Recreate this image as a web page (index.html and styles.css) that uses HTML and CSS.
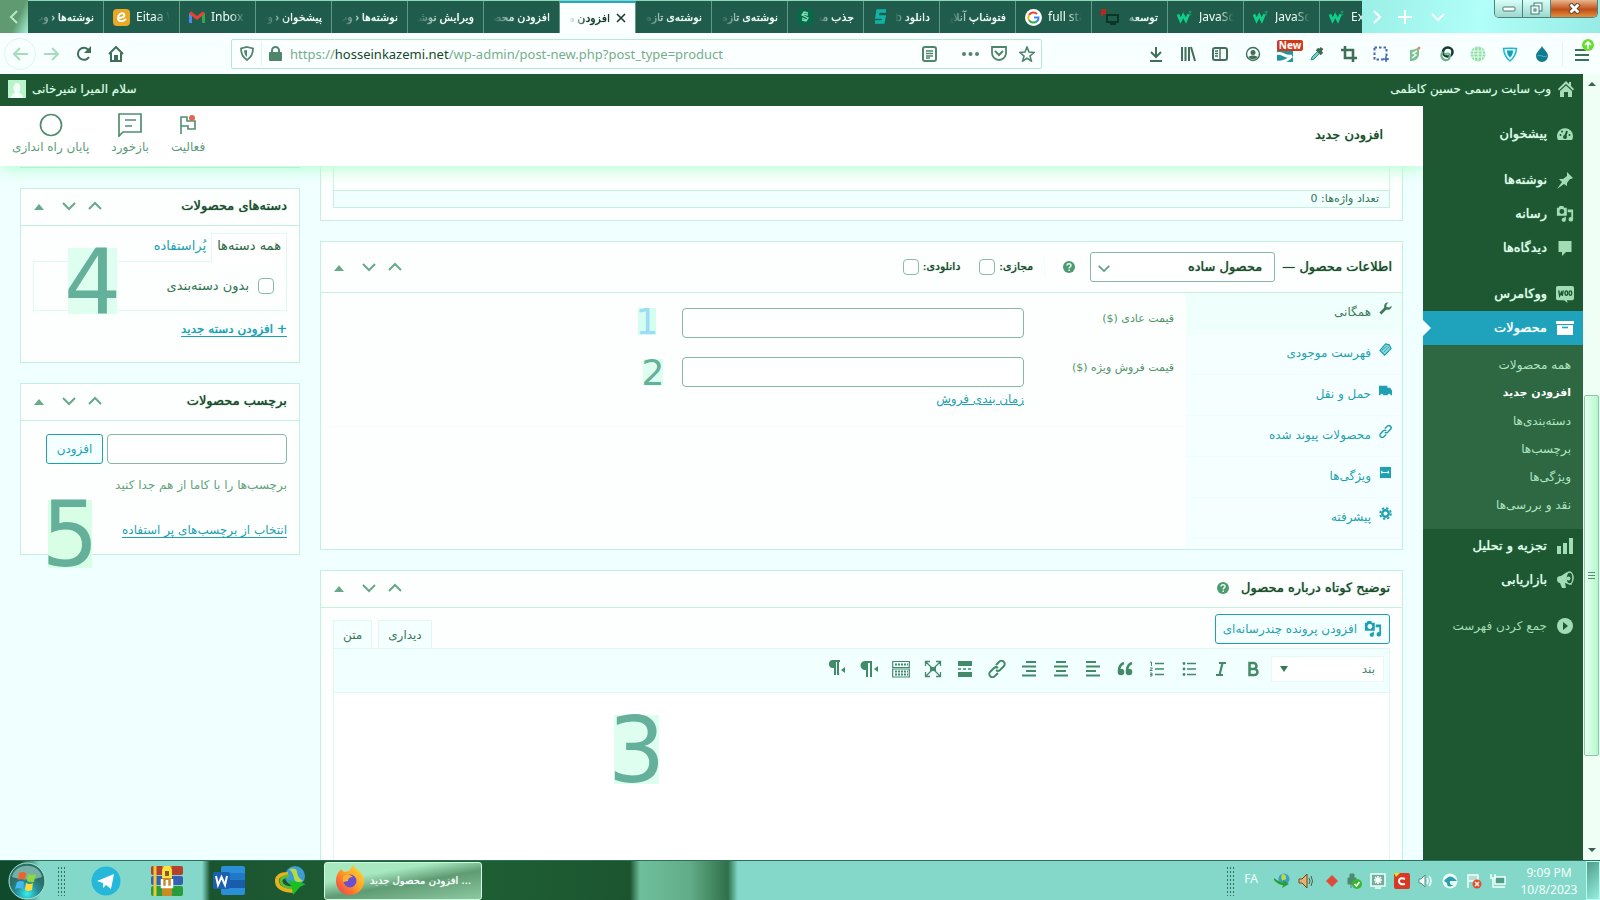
FILE: index.html
```html
<!DOCTYPE html>
<html lang="fa">
<head>
<meta charset="utf-8">
<title>افزودن محصول جدید</title>
<link rel="stylesheet" href="styles.css">
</head>
<body>
<svg class="defs" aria-hidden="true">
  <symbol id="up" viewBox="0 0 16 10"><path d="M2 8l6-6 6 6" fill="none" stroke="currentColor" stroke-width="2"/></symbol>
  <symbol id="down" viewBox="0 0 16 10"><path d="M2 2l6 6 6-6" fill="none" stroke="currentColor" stroke-width="2"/></symbol>
  <symbol id="tri" viewBox="0 0 10 7"><path d="M0 7l5-6 5 6z" fill="currentColor"/></symbol>
  <symbol id="help" viewBox="0 0 14 14"><circle cx="7" cy="7" r="6" fill="currentColor"/><path d="M5 5.6c0-2.6 4-2.6 4 0C9 7 7.200 6.900 7.200 8.500M7.200 9.600v1.400" fill="none" stroke="#dfffec" stroke-width="1.500"/></symbol>
  <symbol id="media" viewBox="0 0 20 20"><path fill="currentColor" fill-rule="evenodd" d="M1 3h2l1-2h4l1 2h3v9H1zM6.500 4.500a2.700 2.700 0 100 5.400 2.700 2.700 0 000-5.400zM13 5h6v11a2.500 2.500 0 11-2-2.500V8h-4zM11 13v3.500a2.300 2.300 0 11-1.500-2.200V13z"/></symbol>
  <symbol id="w3" viewBox="0 0 18 14"><path d="M1 4l3 7 3-6 3 6 3-7" fill="none" stroke="#0fd08a" stroke-width="3"/><path d="M13 1h3l-2 2c2 0 2 2 0 2" fill="none" stroke="#0fb07a"/></symbol>
  <symbol id="link" viewBox="0 0 18 18"><g fill="none" stroke="currentColor" stroke-width="2"><path d="M8 5l3-3a3 3 0 015 4l-4 4a3 3 0 01-4 0"/><path d="M10 13l-3 3a3 3 0 01-5-4l4-4a3 3 0 014 0"/></g></symbol>
  <symbol id="house" viewBox="0 0 18 18"><path fill="currentColor" d="M9 1l3 3V2h2v4l3 3-1 1.500L9 4 2 10.500 1 9zM9 5.500l6 5.500v6h-4v-5H7v5H3v-6z"/></symbol>
</svg>

<header class="tabstrip" dir="ltr">
  <button class="scroll-left" aria-label="قبلی"><svg width="10" height="14" viewBox="0 0 10 14"><path d="M8 1L2 7l6 6" fill="none" stroke="#b8e8c4" stroke-width="2"/></svg></button>
  <nav class="tabs">
    <a href="#" class="tab"><span class="fa">نوشته‌ها ‹ وب</span></a>
    <a href="#" class="tab"><svg width="17" height="17" viewBox="0 0 17 17"><rect width="17" height="17" rx="4" fill="#e9a825"/><path d="M5 9c6 0 7-2 6-4-2-2-6 0-6 4s5 4 8 1" fill="none" stroke="#fff" stroke-width="2"/></svg><span>Eitaa Web</span></a>
    <a href="#" class="tab"><svg width="16" height="12" viewBox="0 0 16 12"><path d="M1.500 12V2" stroke="#4a8af4" stroke-width="3"/><path d="M14.500 12V2" stroke="#30a852" stroke-width="3"/><path d="M1 1.500l7 5.500 7-5.500" fill="none" stroke="#e94235" stroke-width="3"/></svg><span>Inbox (1)</span></a>
    <a href="#" class="tab"><span class="fa">پیشخوان ‹ وب</span></a>
    <a href="#" class="tab"><span class="fa">نوشته‌ها ‹ وب</span></a>
    <a href="#" class="tab"><span class="fa">ویرایش نوشته ‹</span></a>
    <a href="#" class="tab"><span class="fa">افزودن محصول</span></a>
    <a href="#" class="tab active"><span class="fa">افزودن محصول</span><svg width="10" height="10" viewBox="0 0 10 10"><path d="M1 1l8 8M9 1L1 9" stroke="#143c28" stroke-width="1.600"/></svg></a>
    <a href="#" class="tab"><span class="fa">نوشته‌ی تازه ‹</span></a>
    <a href="#" class="tab"><span class="fa">نوشته‌ی تازه ‹</span></a>
    <a href="#" class="tab"><svg width="16" height="16" viewBox="0 0 16 16"><rect width="16" height="16" rx="3" fill="#08684a"/><path d="M11 4L7 3 5 6l6 3-2 3-4-1M11 6L6 5M10 11L5 9" fill="none" stroke="#7fe0b4" stroke-width="1.300"/></svg><span class="fa">جذب مشتری</span></a>
    <a href="#" class="tab"><svg width="16" height="16" viewBox="0 0 16 16"><path d="M13 2H5L4 8h7l-1 5H2" fill="none" stroke="#10b3a8" stroke-width="3.500"/></svg><span class="fa">دانلود eb</span></a>
    <a href="#" class="tab"><span class="fa">فتوشاپ آنلاین</span></a>
    <a href="#" class="tab"><svg width="17" height="17" viewBox="0 0 17 17"><circle cx="8.500" cy="8.500" r="8.500" fill="#fff"/><g fill="none" stroke-width="2"><path d="M12 5A5 5 0 004 6" stroke="#ea4335"/><path d="M4 6a5 5 0 000 5" stroke="#fbbc05"/><path d="M4 11a5 5 0 008 1" stroke="#34a853"/><path d="M12 12.500a5 5 0 001.500-4H9" stroke="#4285f4"/></g></svg><span>full stack</span></a>
    <a href="#" class="tab"><svg width="18" height="16" viewBox="0 0 18 16"><path d="M6 6h11v7H6zM9 15h6" fill="none" stroke="#0b3525" stroke-width="2"/><path d="M1 7V1h3v3H1" fill="none" stroke="#c82020" stroke-width="2"/></svg><span class="fa">توسعه وب</span></a>
    <a href="#" class="tab"><svg width="16" height="14"><use href="#w3"/></svg><span>JavaScript</span></a>
    <a href="#" class="tab"><svg width="16" height="14"><use href="#w3"/></svg><span>JavaScript</span></a>
    <a href="#" class="tab"><svg width="16" height="14"><use href="#w3"/></svg><span>Exercise</span></a>
  </nav>
  <div class="strip-end">
    <svg width="80" height="16" viewBox="0 0 80 16"><g fill="none" stroke="#fff" stroke-width="2"><path d="M2 2l6 6-6 6M33 1v14M26 8h14M60 5l6 6 6-6"/></g></svg>
    <div class="winbtns">
      <button aria-label="کوچک"><svg width="14" height="6"><rect x="1" y="1" width="12" height="4" rx="1" fill="#fff" stroke="#4a7a70"/></svg></button>
      <button aria-label="بازگردانی"><svg width="13" height="13"><g fill="#eaffff" stroke="#4a7a70"><rect x="4" y="1" width="8" height="8"/><rect x="1" y="4" width="8" height="8"/><rect x="4" y="7" width="2" height="2"/></g></svg></button>
      <button class="x" aria-label="بستن"><svg width="13" height="11" viewBox="0 0 13 11"><path d="M2 1l9 9M11 1l-9 9" stroke="#4a3020" stroke-width="4.500"/><path d="M2.500 1.500l8 8M10.500 1.500l-8 8" stroke="#fff" stroke-width="3"/></svg></button>
    </div>
  </div>
</header>

<div class="navbar" dir="ltr">
  <div class="navbtns">
    <button class="back" aria-label="عقب"><svg width="16" height="14" viewBox="0 0 16 14"><path d="M16 7H2M8 1L2 7l6 6" fill="none" stroke="#a6dcbc" stroke-width="2"/></svg></button>
    <button aria-label="جلو"><svg width="16" height="14" viewBox="0 0 16 14"><path d="M0 7h14M8 1l6 6-6 6" fill="none" stroke="#a6dcbc" stroke-width="2"/></svg></button>
    <button aria-label="بارگذاری"><svg width="16" height="16" viewBox="0 0 16 16"><path d="M13 11a6 6 0 11-.5-7" fill="none" stroke="currentColor" stroke-width="2"/><path d="M15 0v7H8z" fill="currentColor"/></svg></button>
    <button aria-label="خانه"><svg width="16" height="16" viewBox="0 0 16 16"><path d="M1 8l7-7 7 7M3 7v8h10V7" fill="none" stroke="currentColor" stroke-width="2"/><path d="M6 9h4v6H6z" fill="currentColor"/></svg></button>
  </div>
  <div class="urlbar">
    <svg width="14" height="15" viewBox="0 0 14 15"><path d="M7 1l6 1.500c0 6-2 9-6 11.500C3 11.500 1 8.500 1 2.500z" fill="none" stroke="currentColor" stroke-width="1.800"/><path d="M7 4l-3 .6c.2 3 1 5 3 6.400z" fill="currentColor"/></svg>
    <i class="vsep"></i>
    <svg width="13" height="15" viewBox="0 0 13 15"><rect y="6" width="13" height="9" rx="1" fill="currentColor"/><path d="M3 7V4.500a3.500 3.500 0 017 0V7" fill="none" stroke="currentColor" stroke-width="2"/></svg>
    <span class="url">https://<b>hosseinkazemi.net</b>/wp-admin/post-new.php?post_type=product</span>
    <span class="urlicons">
      <svg width="15" height="16" viewBox="0 0 15 16"><rect x="1" y="1" width="13" height="14" rx="2" fill="none" stroke="currentColor" stroke-width="2"/><path d="M4 5h7M4 7.500h7M4 10h7M4 12h4" stroke="currentColor" stroke-width="1.300"/></svg>
      <svg class="dots" width="17" height="4" viewBox="0 0 17 4"><circle cx="2" cy="2" r="2" fill="currentColor"/><circle cx="8.500" cy="2" r="2" fill="currentColor"/><circle cx="15" cy="2" r="2" fill="currentColor"/></svg>
      <svg width="16" height="15" viewBox="0 0 16 15"><path d="M1 1h14v6a7 7 0 01-14 0z" fill="none" stroke="currentColor" stroke-width="1.800"/><path d="M4 5l4 4 4-4" fill="none" stroke="currentColor" stroke-width="2"/></svg>
      <svg width="16" height="16" viewBox="0 0 16 16"><path d="M8 1l2 5 5 .5-4 3.500 1.300 5L8 12.300 3.700 15 5 10 1 6.500 6 6z" fill="none" stroke="currentColor" stroke-width="1.600"/></svg>
    </span>
  </div>
  <div class="ext">
    <svg viewBox="0 0 16 16"><path d="M8 1v10M3 6l5 5 5-5M2 15h12" fill="none" stroke="currentColor" stroke-width="2"/></svg>
    <svg viewBox="0 0 16 16"><path d="M2 1v14M5.500 1v14M9 1v14M11 1l4 14" stroke="currentColor" stroke-width="2"/></svg>
    <svg viewBox="0 0 16 16"><rect x="1" y="2" width="14" height="12" rx="2" fill="none" stroke="currentColor" stroke-width="2"/><path d="M8 2v12M3 5h3M3 7.500h3M3 10h3" stroke="currentColor" stroke-width="1.400"/></svg>
    <svg viewBox="0 0 16 16"><circle cx="8" cy="8" r="6.500" fill="none" stroke="currentColor" stroke-width="1.400"/><circle cx="8" cy="6.500" r="2.500" fill="currentColor"/><path d="M3.500 11c2-2 7-2 9 0-2 3-7 3-9 0z" fill="currentColor"/></svg>
    <span class="newext"><svg viewBox="0 0 16 16"><rect width="16" height="16" fill="#21939a"/><path d="M0 8c4-3 8 4 15 2M0 16c7 1 12-3 15-6" stroke="#fff" stroke-width="3" fill="none"/></svg><em>New</em></span>
    <svg viewBox="0 0 16 16"><path d="M2 14l1-3 6-6 2 2-6 6z" fill="#6fd0c0" stroke="#2c8a80"/><path d="M8 3l5 5M10 6l3-4" stroke="#3b6b50" stroke-width="3.500"/></svg>
    <svg viewBox="0 0 16 16"><path d="M4 0v12h12M0 4h12v12" fill="none" stroke="currentColor" stroke-width="2.600"/></svg>
    <svg viewBox="0 0 16 16"><rect x="1.500" y="1.500" width="12" height="12" fill="none" stroke="#4565b5" stroke-width="2" stroke-dasharray="2.500 2"/><path d="M13 10v6M10 13h6" stroke="#4565b5" stroke-width="1.500"/></svg>
    <svg viewBox="0 0 16 16"><path d="M4 4c3 0 7-1 9-3v8c-1 4-4 6-9 6z" fill="#7fbf94"/><path d="M11 5L7 7l3 2-4 3" stroke="#eafff2" stroke-width="1.500" fill="none"/><circle cx="13" cy="2" r="1.500" fill="#e89070"/></svg>
    <svg viewBox="0 0 16 16"><rect x="5" y="1.500" width="9.500" height="9" rx="4.500" fill="none" stroke="#123e2c" stroke-width="2.600"/><path d="M5 6a4.500 4.500 0 106 7l1-4c-1-2-4-2-5 0" fill="none" stroke="#6fb090" stroke-width="2.200"/></svg>
    <svg viewBox="0 0 16 16"><circle cx="8" cy="8" r="7.500" fill="#8fdca4"/><path d="M1 5h14M1 11h14M0 8h16M8 0v16M5 1Q2 8 5 15M11 1q3 7 0 14" stroke="#e8fff0" fill="none"/></svg>
    <svg viewBox="0 0 16 16"><path d="M8 15C4 12 2 8 1.500 2.500 6 2 10 2 14.500 2.500 14 8 12 12 8 15z" fill="#d8ffff" stroke="#25b4d0" stroke-width="1.500"/><path d="M8 4.500h3c0 3-1 5-3 7-2-2-3-4-3-7z" fill="#159cba"/></svg>
    <svg viewBox="0 0 16 16"><path d="M8 0c2 4 6 6 6 10a6 6 0 01-12 0c0-4 4-6 6-10z" fill="#137b90"/><path d="M3 10c4-2 6 2 10 0" stroke="#45b8c4" fill="none"/></svg>
    <i class="vsep"></i>
    <button class="menu" aria-label="منو"><svg width="20" height="24" viewBox="0 0 20 24"><path d="M1 11h11M1 16h14M1 21h14" stroke="#3f7057" stroke-width="2"/><circle cx="14" cy="6" r="6" fill="#63e02c"/><path d="M14 10V3M11 6l3-3 3 3" fill="none" stroke="#fff" stroke-width="1.700"/></svg></button>
  </div>
</div>

<div class="viewport">
  <div class="site" dir="rtl">
    <div class="adminbar">
      <a href="#"><svg width="18" height="18" class="pale"><use href="#house"/></svg>وب سایت رسمی حسین کاظمی</a>
      <a href="#">سلام المیرا شیرخانی<svg width="18" height="18" viewBox="0 0 18 18"><rect width="18" height="18" fill="#b8f5cc"/><path d="M3 18c0-4 3-4 4-6C4 8 6 3 9 3s5 5 2 9c1 2 4 2 4 6z" fill="#f4fff8"/></svg></a>
    </div>
    <div class="wrap">
      <nav class="sidebar">
        <a href="#"><svg viewBox="0 0 18 18"><path d="M2 15a8 8 0 1114 0z" fill="currentColor"/><path d="M9 12l2-6" stroke="#1d5832" stroke-width="2"/><g fill="#1d5832"><circle cx="9" cy="12" r="2"/><circle cx="4.500" cy="10" r="1"/><circle cx="6" cy="6.500" r="1"/><circle cx="13.500" cy="10" r="1"/></g></svg>پیشخوان</a>
        <hr>
        <a href="#"><svg viewBox="0 0 18 18"><path d="M11 1l6 6-2 1-1 0-3 4v3l-3-2-7 5 5-7-3-3h4l4-3z" fill="currentColor"/></svg>نوشته‌ها</a>
        <a href="#"><svg viewBox="0 0 20 20"><use href="#media"/></svg>رسانه</a>
        <a href="#"><svg viewBox="0 0 18 18"><path d="M2.500 2h13v11H10l-4 4v-4H2.500z" fill="currentColor"/></svg>دیدگاه‌ها</a>
        <hr>
        <a href="#"><svg viewBox="0 0 20 20" class="woo"><path d="M2 1h16q2 0 2 2v12q0 2-2 2h-6l1 3-4-3H2q-2 0-2-2V3q0-2 2-2z" fill="currentColor"/><path d="M3 6l1 6 2-4 1 4 1-6" fill="none" stroke="#1d5832" stroke-width="1.500"/><g fill="none" stroke="#1d5832" stroke-width="1.500"><ellipse cx="11.500" cy="9" rx="1.500" ry="2.500"/><ellipse cx="16" cy="9" rx="1.500" ry="2.500"/></g></svg>ووکامرس</a>
        <a href="#" class="current"><svg viewBox="0 0 18 18"><path d="M0 2h18v3H0zM1 6h16v10H1z" fill="#fff"/><path d="M6 8.500h6" stroke="#1fa3bd" stroke-width="1.600"/></svg>محصولات</a>
        <div class="sub">
          <a href="#">همه محصولات</a><a href="#" class="on">افزودن جدید</a><a href="#">دسته‌بندی‌ها</a><a href="#">برچسب‌ها</a><a href="#">ویژگی‌ها</a><a href="#">نقد و بررسی‌ها</a>
        </div>
        <a href="#"><svg viewBox="0 0 18 18"><path d="M1 9h4v8H1zM7 6h4v11H7zM13 1h4v16h-4z" fill="currentColor"/></svg>تجزیه و تحلیل</a>
        <a href="#"><svg viewBox="0 0 18 18"><path d="M1 8q0-3 4-3l6-4 5 13-7-2 1 5H6l-2-5Q1 12 1 8z" fill="currentColor"/><ellipse cx="13.500" cy="7" rx="3.500" ry="6" fill="#1d5832" stroke="currentColor" stroke-width="1.500"/><circle cx="12.500" cy="7.500" r="2" fill="currentColor"/></svg>بازاریابی</a>
        <hr>
        <a href="#" class="collapse"><svg viewBox="0 0 18 18"><circle cx="9" cy="9" r="8" fill="currentColor"/><path d="M7 5l5 4-5 4z" fill="#1d5832"/></svg>جمع کردن فهرست</a>
      </nav>

      <main>
        <div class="pagehead">
          <h1>افزودن جدید</h1>
          <div class="acts">
            <button><svg width="24" height="24" viewBox="0 0 24 24"><path d="M5 21V4h6v4h8v8h-7v-3H5" fill="none" stroke="currentColor" stroke-width="1.600"/><circle cx="16" cy="5" r="3" fill="#dd6a50"/></svg>فعالیت</button>
            <button><svg width="24" height="24" viewBox="0 0 24 24"><path d="M1 1h22v18H5l-4 4zM7 7h11M7 13h7" fill="none" stroke="currentColor" stroke-width="1.700"/></svg>بازخورد</button>
            <button><svg width="24" height="24" viewBox="0 0 24 24"><circle cx="12" cy="12" r="10.500" fill="none" stroke="currentColor" stroke-width="1.700"/></svg>پایان راه اندازی</button>
          </div>
        </div>

        <div class="content">
          <div class="primary">
            <section class="box editor-end"><div class="edit-area"></div><div class="wordcount">تعداد واژه‌ها: 0</div></section>

            <section class="box product">
              <div class="boxhead tall">
                <h2>اطلاعات محصول —</h2>
                <span class="selwrap"><select aria-label="نوع محصول"><option>محصول ساده</option></select><svg width="14" height="9"><use href="#down"/></svg></span>
                <svg class="help" width="14" height="14"><use href="#help"/></svg>
                <label class="first">مجازی:<input type="checkbox"></label>
                <label>دانلودی:<input type="checkbox"></label>
                <div class="handles"><svg width="16" height="10"><use href="#up"/></svg><svg width="16" height="10"><use href="#down"/></svg><svg class="t" width="10" height="7"><use href="#tri"/></svg></div>
              </div>
              <div class="pbody">
                <div class="ptabs">
                  <a href="#" class="on"><svg viewBox="0 0 14 14"><path d="M1.500 12.500L8 6" stroke="currentColor" stroke-width="3"/><path d="M10 0.500a4 4 0 103.500 3.500L11 6 8 5.500V3z" fill="currentColor"/></svg>همگانی</a>
                  <a href="#"><svg viewBox="0 0 14 14"><path d="M7 1l4 1 2 4-7 7-5-5z" fill="#8fd8dc" stroke="currentColor" stroke-width="1.300"/><path d="M3 8l6-5M5 10l6-6" stroke="currentColor"/></svg>فهرست موجودی</a>
                  <a href="#"><svg viewBox="0 0 14 14"><path d="M0 2h9v2h3l2 3v5H0z" fill="currentColor"/><circle cx="3" cy="12" r="1.500" fill="#f4ffff"/><circle cx="11" cy="12" r="1.500" fill="#f4ffff"/></svg>حمل و نقل</a>
                  <a href="#"><svg viewBox="0 0 18 18"><use href="#link"/></svg>محصولات پیوند شده</a>
                  <a href="#"><svg viewBox="0 0 14 14"><path d="M1 1h12v12H1z" fill="currentColor"/><path d="M3 8V5m0 2h4m3 1V5M7 7h4" stroke="#f4ffff" stroke-width="1.300"/></svg>ویژگی‌ها</a>
                  <a href="#"><svg viewBox="0 0 14 14"><circle cx="7" cy="7" r="3.500" fill="none" stroke="currentColor" stroke-width="2.500"/><circle cx="7" cy="7" r="5.800" fill="none" stroke="currentColor" stroke-width="2" stroke-dasharray="2.500 2.050"/></svg>پیشرفته</a>
                </div>
                <div class="fields">
                  <div class="frow"><label for="p1">قیمت عادی ($)</label><input id="p1" type="text"><span class="mark m1">1</span></div>
                  <div class="frow"><label for="p2">قیمت فروش ویژه ($)</label><input id="p2" type="text"><span class="mark m2">2</span></div>
                  <a href="#" class="sched">زمان بندی فروش</a>
                </div>
              </div>
            </section>

            <section class="box short">
              <div class="boxhead"><h2>توضیح کوتاه درباره محصول</h2><svg class="help" width="14" height="14"><use href="#help"/></svg>
                <div class="handles"><svg width="16" height="10"><use href="#up"/></svg><svg width="16" height="10"><use href="#down"/></svg><svg class="t" width="10" height="7"><use href="#tri"/></svg></div></div>
              <div class="edtop">
                <button class="addmedia"><svg width="18" height="18" viewBox="0 0 20 20"><use href="#media"/></svg>افزودن پرونده چندرسانه‌ای</button>
                <div class="edtabs"><button class="on">دیداری</button><button>متن</button></div>
              </div>
              <div class="editor">
                <div class="toolbar">
                  <button class="para">بند<svg width="8" height="6"><path d="M0 0h8L4 6z" fill="#357a58"/></svg></button>
                  <svg viewBox="0 0 18 18"><path d="M5.500 3h4a3 3 0 010 6h-4zM5.500 9h5a3 3 0 010 6h-5z" fill="none" stroke="currentColor" stroke-width="2.500"/></svg>
                  <svg viewBox="0 0 18 18"><path d="M7 3h7M4 15h7M10.500 3l-3 12" stroke="currentColor" stroke-width="2.200"/></svg>
                  <svg viewBox="0 0 18 18"><path d="M7 3.500h9M7 9h9M7 14.500h9" stroke="currentColor" stroke-width="1.300"/><circle cx="4" cy="3.500" r="1.400" fill="currentColor"/><circle cx="4" cy="9" r="1.400" fill="currentColor"/><circle cx="4" cy="14.500" r="1.400" fill="currentColor"/></svg>
                  <svg viewBox="0 0 18 18"><path d="M7 3.500h9M7 9h9M7 14.500h9" stroke="currentColor" stroke-width="1.300"/><path d="M2 2h1.500v4M2 8h2.500L2 10.500h2.500M2 13h2v3H2M2 14.500h2" fill="none" stroke="currentColor"/></svg>
                  <svg viewBox="0 0 18 18"><path d="M8 3C5 4 3 6 3 11M16 3c-3 1-5 3-5 8" fill="none" stroke="currentColor" stroke-width="2.400"/><circle cx="5" cy="12" r="3.300" fill="currentColor"/><circle cx="13" cy="12" r="3.300" fill="currentColor"/></svg>
                  <svg viewBox="0 0 18 18"><path d="M2 2h10M2 6.500h14M2 11h10M2 15.500h14" stroke="currentColor" stroke-width="2"/></svg>
                  <svg viewBox="0 0 18 18"><path d="M4 2h10M2 6.500h14M4 11h10M2 15.500h14" stroke="currentColor" stroke-width="2"/></svg>
                  <svg viewBox="0 0 18 18"><path d="M6 2h10M2 6.500h14M6 11h10M2 15.500h14" stroke="currentColor" stroke-width="2"/></svg>
                  <svg viewBox="0 0 18 18"><use href="#link"/></svg>
                  <svg viewBox="0 0 18 18"><path d="M2 1h14v5H2zM2 12h14v5H2z" fill="currentColor"/><path d="M2 9h14" stroke="currentColor" stroke-width="1.600" stroke-dasharray="3 2"/></svg>
                  <svg viewBox="0 0 18 18"><path d="M2 2l14 14M16 2L2 16M1.500 6V1.500H6M12 1.500h4.500V6M16.500 12v4.500H12M6 16.500H1.500V12" fill="none" stroke="currentColor" stroke-width="1.300"/><path d="M6 7h6v4H6z" fill="currentColor"/></svg>
                  <svg viewBox="0 0 18 18"><path d="M.7 1.500h16.600v6H.7zM.7 9h16.600v8H.7z" fill="none" stroke="currentColor" stroke-width="1.200"/><path d="M3 4.500h13M3 11.500h13M3 14.500h13" stroke="currentColor" stroke-width="2" stroke-dasharray="2 1"/></svg>
                  <svg viewBox="0 0 18 18"><path d="M12 1H5a4 4 0 000 9h1v7h2V3h2v14h2z" fill="currentColor"/><path d="M18 6v6l-4-3z" fill="currentColor"/></svg>
                  <svg viewBox="0 0 18 18"><path d="M12 0H5a4 4 0 000 8h1v7h2V2h1v13h2V2h1z" fill="currentColor"/><path d="M17 7v6l-4-3z" fill="currentColor"/></svg>
                </div>
                <div class="canvas"><span class="mark m3">3</span></div>
              </div>
            </section>
          </div>

          <aside class="secondary">
            <div class="stub"></div>
            <section class="box cats">
              <div class="boxhead"><h2>دسته‌های محصولات</h2><div class="handles"><svg width="16" height="10"><use href="#up"/></svg><svg width="16" height="10"><use href="#down"/></svg><svg class="t" width="10" height="7"><use href="#tri"/></svg></div></div>
              <div class="inside">
                <div class="cattabs"><a href="#" class="on">همه دسته‌ها</a><a href="#">پُراستفاده</a></div>
                <div class="catlist"><label><input type="checkbox">بدون دسته‌بندی</label></div>
                <a href="#" class="ul strong">+ افزودن دسته جدید</a>
                <span class="mark m4">4</span>
              </div>
            </section>
            <section class="box tags">
              <div class="boxhead"><h2>برچسب محصولات</h2><div class="handles"><svg width="16" height="10"><use href="#up"/></svg><svg width="16" height="10"><use href="#down"/></svg><svg class="t" width="10" height="7"><use href="#tri"/></svg></div></div>
              <div class="inside">
                <div class="tagrow"><input type="text" aria-label="برچسب محصولات"><button>افزودن</button></div>
                <p>برچسب‌ها را با کاما از هم جدا کنید</p>
                <a href="#" class="ul">انتخاب از برچسب‌های پر استفاده</a>
                <span class="mark m5">5</span>
              </div>
            </section>
          </aside>
        </div>
      </main>
    </div>
  </div>
  <div class="scrollbar">
    <svg width="8" height="5"><path d="M0 5l4-4 4 4z" fill="#386050"/></svg>
    <div class="thumb"><i></i><i></i><i></i></div>
    <svg width="8" height="5"><path d="M0 0l4 4 4-4z" fill="#386050"/></svg>
  </div>
</div>

<footer class="taskbar" dir="ltr">
  <button class="orb" aria-label="شروع"><svg width="38" height="38" viewBox="0 0 38 38"><defs><radialGradient id="og" cx=".5" cy=".85"><stop offset="0" stop-color="#35f0f0"/><stop offset=".6" stop-color="#258f98"/><stop offset="1" stop-color="#2b7068"/></radialGradient></defs><circle cx="19" cy="19" r="18" fill="url(#og)" stroke="#a8e8d8"/><path d="M4 15C7 0 31 0 34 15q-15 5-30 0z" fill="#d0fff0" opacity=".45"/><path d="M11 11q4-2 7 0l-1 7q-3-2-7 0z" fill="#f0622c"/><path d="M20 12q4 2 8 0l-2 8q-3 1-7-1z" fill="#8fd837"/><path d="M9 20q4-2 7 0l-1 7q-4-2-8 0z" fill="#46b8f0"/><path d="M18 21q4 2 7 0l-1 7q-4 2-7 0z" fill="#ffd83a"/></svg></button>
  <i class="grip"></i>
  <div class="pins">
    <button aria-label="Telegram"><svg width="30" height="30" viewBox="0 0 30 30"><circle cx="15" cy="15" r="14.500" fill="#26b8d8"/><path d="M6 15l17-7-3 15-5-4-3 3v-5z" fill="#fff"/></svg></button>
    <button aria-label="WinRAR"><svg width="32" height="30" viewBox="0 0 32 30"><rect width="32" height="9" rx="2" fill="#b5402c"/><rect y="10" width="32" height="9" rx="2" fill="#3560b0"/><rect y="20" width="32" height="10" rx="2" fill="#2a9c3a"/><path d="M4 0v30" stroke="#f0c838" stroke-width="3"/><rect x="11" width="10" height="30" fill="#c98a28"/><path d="M11 4l2-4h6l2 4v8H11z" fill="#ffe040"/><path d="M14 5h4v5h-4z" fill="#806020"/><path d="M11 13v8h10v-8M16 14v6" fill="none" stroke="#fff" stroke-width="2.500"/></svg></button>
    <button aria-label="Word"><svg width="32" height="29" viewBox="0 0 32 29"><rect x="8" width="24" height="29" rx="2" fill="#2a8fd8"/><path d="M8 7h24v7H8z" fill="#2078c8"/><path d="M8 14h24v8H8z" fill="#185cab"/><rect y="6" width="17" height="17" rx="2" fill="#1a5fb0"/><path d="M3 10l2 9 3.500-8 3.500 8 2-9" fill="none" stroke="#fff" stroke-width="2"/></svg></button>
    <button aria-label="IDM"><svg width="32" height="30" viewBox="0 0 32 30"><circle cx="20" cy="10" r="10" fill="#3d9bd8"/><path d="M14 3q8-2 8 3t6 9q-8 3-9-3t-5-9z" fill="#b8dc40"/><path d="M13 8Q1 8 2 16t16 9" fill="none" stroke="#e8b020" stroke-width="4"/><path d="M14 10Q5 11 6 16t11 6" fill="none" stroke="#58c030" stroke-width="3"/><path d="M13 14l18 4-6 3-7 8-1-7z" fill="#18c020"/></svg></button>
  </div>
  <button class="task"><svg width="30" height="31" viewBox="0 0 30 31"><defs><linearGradient id="fx" x1="1" y1="0" x2="0" y2="1"><stop offset="0" stop-color="#ffe23a"/><stop offset=".5" stop-color="#ff9a24"/><stop offset="1" stop-color="#f0304c"/></linearGradient></defs><path d="M3 8l3-4 3 3 5-1 4-6c2 4 11 7 11 16a14 14 0 01-28 0c0-4 1-6 2-8z" fill="url(#fx)"/><circle cx="15" cy="16" r="6.500" fill="#6a50d0"/><path d="M8 12q5-5 10 0-5 0-5 4l-5 1z" fill="#ffb030"/></svg><span dir="ltr">افزودن محصول جدید ...</span></button>
  <div class="tray">
    <i class="grip"></i><span class="lang">FA</span>
    <svg viewBox="0 0 16 16"><circle cx="10" cy="6" r="5.500" fill="#3d9bd0"/><path d="M8 1q5 0 4 5l-3 2q-3-3-1-7z" fill="#b8dc40"/><path d="M0 7q4 5 9 5l-1 3 7-4-6-4v3Q5 9 0 5z" fill="#28a030"/></svg>
    <svg viewBox="0 0 16 16"><path d="M1 6h3l5-5v14l-5-5H1z" fill="#e8b070" stroke="#704820"/><path d="M11 5q2 3 0 6M13 3q3 5 0 10" fill="none" stroke="#506040"/></svg>
    <svg viewBox="0 0 16 16"><path d="M10 2l6 6-6 6-6-6z" fill="#e04a38"/></svg>
    <svg viewBox="0 0 16 16"><path d="M4 1h4v4h2v6H2V5h2zM5 11v4" fill="#4f8a70" stroke="#4f8a70"/><circle cx="11" cy="11" r="5" fill="#38b830"/><path d="M8.500 11l2 2 3-4" fill="none" stroke="#fff" stroke-width="1.600"/></svg>
    <svg viewBox="0 0 16 16"><path d="M1 1h14v12H1zM5 15h6" fill="#6fae9c" stroke="#f2fffa" stroke-width="1.600"/><path d="M8 3v8M4 7h8M5 4l6 6M11 4l-6 6" stroke="#fff" stroke-width="1.600"/></svg>
    <svg viewBox="0 0 16 16"><rect width="16" height="16" rx="2" fill="#d83824"/><path d="M11 6Q5 4 5 8t6 3" fill="none" stroke="#fff" stroke-width="2"/><path d="M0 0h6L2 4z" fill="#e8e020"/></svg>
    <svg viewBox="0 0 16 16"><path d="M1 6h2l4-4v12l-4-4H1z" fill="#f8fffc" stroke="#5a9080"/><path d="M9 5q2 3 0 6M11 3q4 5 0 10" fill="none" stroke="#f8fffc" stroke-width="1.500"/></svg>
    <svg viewBox="0 0 16 16"><circle cx="8" cy="8" r="7.500" fill="#e8fff8"/><path d="M2 8q6-8 11-2l2 2H8q-1 5 4 4-7 4-7-2z" fill="#2c9cb0"/></svg>
    <svg viewBox="0 0 16 16"><path d="M2 1v14M3 2h9v6H3" fill="#b8ded4" stroke="#f2fffa" stroke-width="1.500"/><circle cx="11" cy="11" r="4.500" fill="#e05030"/><path d="M9 9l4 4m0-4l-4 4" stroke="#fff" stroke-width="1.300"/></svg>
    <svg viewBox="0 0 16 16"><path d="M5 4h10v7H5z" fill="#4f9c88" stroke="#f2fffa" stroke-width="1.500"/><path d="M7 14h8M1 1v4h4V1M3 5v9h5" fill="none" stroke="#f2fffa" stroke-width="1.500"/></svg>
    <div class="clock"><span>9:09 PM</span><span>10/8/2023</span></div>
    <button class="desk" aria-label="میز کار"></button>
  </div>
</footer>
</body>
</html>
```
FILE: styles.css
```css
* { box-sizing: border-box; }
html, body { margin: 0; height: 100%; }
body { display: flex; flex-direction: column; overflow: hidden; background: #f0ffff; color: #357553; font: 12px/20px "DejaVu Sans", sans-serif; }
a { color: inherit; text-decoration: none; }
button, input, select { font: inherit; color: inherit; }
button { background: none; border: 0; padding: 0; display: flex; align-items: center; justify-content: center; }
svg { display: block; flex: none; }
h1, h2, p { margin: 0; }
.defs { position: absolute; width: 0; height: 0; }
.vsep { width: 1px; height: 24px; background: #dcf8ec; }

.tabstrip { flex: none; display: flex; height: 33px; background: #205c4b; font-family: "Noto Sans", "DejaVu Sans", sans-serif; }
.scroll-left { width: 28px; background: linear-gradient(115deg, #5f9a70 60%, #a8f0d8); }
.tabs { display: flex; flex: 1; min-width: 0; overflow: hidden; border-top: 1px solid #8cd8b8; }
.tab { flex: none; display: flex; align-items: center; gap: 6px; width: 76px; padding: 0 9px; color: #f2fff8; border-right: 1px solid #5f9a84; }
.tab span { flex: 1; min-width: 0; overflow: hidden; white-space: nowrap; mask-image: linear-gradient(to right, #000 55%, transparent); }
.tab .fa { direction: rtl; font-size: 11px; text-shadow: 0 0 1px currentColor; mask-image: linear-gradient(to left, #000 60%, transparent); }
.tab.active { background: #fbffff; color: #143c28; border-top: 2px solid #25a5c8; }
.strip-end { width: 238px; display: flex; justify-content: space-between; align-items: center; padding: 0 2px 0 10px; background: linear-gradient(100deg, #9aefe6, #b0fff8 50%, #98ebe5); }
.winbtns { display: flex; align-self: flex-start; height: 18px; border: 1px solid #4f827b; border-top: 0; border-radius: 0 0 5px 5px; overflow: hidden; }
.winbtns button { width: 28px; border-right: 1px solid #4f827b; background: linear-gradient(#d8fff8, #9bd8cf); }
.winbtns .x { width: 46px; border: 0; background: linear-gradient(#e8b890, #c05018 55%, #e0903c); }

.navbar { flex: none; display: flex; align-items: center; height: 41px; background: #f8ffff; color: #3f7057; }
.navbtns { display: flex; width: 231px; padding-left: 4px; }
.navbtns button { width: 32px; height: 32px; }
.navbtns .back { border: 1px solid #d8f8e8; border-radius: 50%; }
.urlbar { flex: 1; display: flex; align-items: center; gap: 8px; height: 30px; padding: 0 6px 0 8px; border: 1px solid #b8e8d0; border-radius: 2px; background: #fcffff; color: #4f8568; }
.urlbar .vsep { margin: 0 -1px; }
.url { flex: 1; font: 13px/20px "Noto Sans", sans-serif; color: #75ae8c; white-space: nowrap; }
.url b { font-weight: normal; color: #144a2c; }
.urlicons { display: flex; align-items: center; gap: 12px; }
.dots { margin-left: 13px; }
.ext { width: 558px; display: flex; align-items: center; justify-content: space-between; padding: 0 6px 0 106px; }
.ext .vsep { margin: 0 -5px; }
.ext > svg, .newext svg { width: 16px; height: 16px; }
.newext { position: relative; }
.newext em { position: absolute; left: 0; top: -6px; padding: 0 2px; border-radius: 2px; background: #cf3a1c; color: #fff; font: bold 10px/11px "Noto Sans", sans-serif; }
.menu { align-self: flex-start; margin-bottom: 6px; }

.viewport { flex: 1; min-height: 0; display: flex; }
.site { flex: 1; min-width: 0; display: flex; flex-direction: column; }
.adminbar { flex: none; height: 32px; display: flex; justify-content: space-between; align-items: center; padding: 0 8px 2px; background: #1d5832; color: #dcffe8; font-size: 12px; }
.adminbar a { display: flex; align-items: center; gap: 6px; text-shadow: 0 0 1px #dcffe880; }
.pale { color: #a8dcb8; }
.wrap { flex: 1; min-height: 0; display: flex; }
.sidebar { width: 160px; flex: none; padding-top: 11px; background: #1d5832; color: #dcffe8; overflow: hidden; font-size: 13px; }
.sidebar > a { display: flex; align-items: center; gap: 9px; height: 34px; padding-right: 9px; text-shadow: 0 0 1px #dcffe8; }
.sidebar > a > svg { width: 18px; height: 18px; color: #a2dcb4; }
.sidebar hr { height: 12px; margin: 0; border: 0; }
.sidebar .current { background: #1fa3bd; color: #fff; position: relative; }
.current::after { content: ""; position: absolute; left: 0; top: 9px; border: 8px solid transparent; border-left-color: #f4ffff; border-right: 0; }
.sub { display: flex; flex-direction: column; padding: 6px 12px 10px; background: #2d6843; color: #b0e4c0; font-size: 12px; }
.sub a { line-height: 28px; }
.sub .on { color: #fff; font-size: 11px; font-weight: bold; }
.sidebar .collapse { color: #a2dcb4; font-size: 12px; text-shadow: none; }

main { flex: 1; min-width: 0; display: flex; flex-direction: column; }
.pagehead { flex: none; display: flex; justify-content: space-between; align-items: center; height: 60px; padding: 0 40px 2px 12px; background: #fff; box-shadow: 0 4px 14px #b8ffd4; clip-path: inset(0 0 -24px 0); position: relative; }
h1, h2, select, .strong, .boxhead label { text-shadow: 0 0 1px currentColor; }
h1 { font-size: 13px; font-weight: normal; color: #1a4d2c; }
.acts { display: flex; gap: 22px; color: #5a9c78; }
.acts button { flex-direction: column; }
.acts button svg { color: #4f8f70; }
.content { flex: 1; min-height: 0; overflow: hidden; display: flex; gap: 20px; padding: 0 20px; }
.primary { flex: 1; min-width: 0; display: flex; flex-direction: column; gap: 20px; }
.box { background: #fdfffe; border: 1px solid #c5f0da; }
.editor-end { border-top: 0; flex: none; padding: 0 12px 12px; }
.edit-area { height: 24px; border: 1px solid #d0f4e4; border-width: 0 1px; }
.wordcount { border: 1px solid #c5f0da; line-height: 16px; padding: 0 10px; background: #f2ffff; font-size: 11px; }
.boxhead { display: flex; align-items: center; height: 37px; padding: 0 12px 2px; border-bottom: 1px solid #c5f0da; color: #1a4d2c; }
.boxhead.tall { height: 51px; padding: 0 10px 0 12px; }
h2 { font-size: 13px; font-weight: normal; white-space: nowrap; }
.handles { display: flex; align-items: center; margin-right: auto; gap: 10px; color: #68a98c; }
.handles .t { margin: 0 7px 0 1px; }
.help { color: #4f9a70; margin-right: 14px; }
.selwrap { position: relative; margin-right: 7px; }
.selwrap svg { position: absolute; left: 7px; top: 12px; color: #5fa083; pointer-events: none; }
select { appearance: none; width: 185px; height: 30px; padding: 0 12px; border: 1px solid #86b8a2; border-radius: 3px; background: #fff; font-size: 13px; }
.boxhead label { display: flex; align-items: center; gap: 4px; font-size: 11px; margin-right: 19px; }
.boxhead .first { margin-right: 17px; padding-right: 11px; border-right: 1px solid #edfff6; }
input[type="checkbox"] { appearance: none; width: 16px; height: 16px; margin: 0; border: 1px solid #86bda4; border-radius: 4px; background: #fff; }
input[type="text"] { border: 1px solid #86b8a2; border-radius: 4px; background: #fff; height: 30px; }
.product { flex: none; }
.pbody { display: flex; height: 256px; }
.ptabs { width: 216px; background: #f6ffff; color: #1f9fb0; border-left: 1px solid #eefff8; }
.ptabs a { display: flex; gap: 8px; height: 41px; padding: 9px 10px 0; border-bottom: 1px solid #ecfffa; }
.ptabs svg { width: 13px; height: 13px; }
.ptabs .on { background: #eefffc; color: #3f7a58; }
.fields { flex: 1; height: 134px; padding: 15px 12px 0; border-bottom: 1px solid #f0fff8; color: #4f9468; }
.frow { position: relative; display: flex; margin-bottom: 19px; }
.frow label { width: 150px; font-size: 11px; line-height: 22px; }
.frow input { width: 342px; }
.sched { display: block; width: max-content; margin: -17px 150px 0 0; color: #1f9fb0; text-decoration: underline; }
.mark { position: absolute; direction: ltr; display: flex; justify-content: center; align-items: center; background: #deffef; color: #64b09a; line-height: 1; }
.m1 { right: 518px; top: 0; width: 18px; height: 27px; font-size: 36px; padding-top: 1px; background: #d4fff0; color: #9cdcf4; }
.m2 { right: 511px; top: 2px; width: 20px; height: 27px; font-size: 36px; padding-top: 1px; }
.short { flex: 1; min-height: 0; display: flex; flex-direction: column; border-bottom: 0; }
.short .help { margin-right: 11px; }
.short > .boxhead { flex: none; }
.edtop { flex: none; display: flex; justify-content: space-between; align-items: flex-end; height: 40px; padding: 0 12px; }
.addmedia { align-self: flex-start; margin-top: 6px; height: 30px; gap: 7px; padding: 0 7px; border: 1px solid #1f9fb0; border-radius: 3px; color: #1f9fb0; background: #f4ffff; }
.edtabs { display: flex; gap: 6px; }
.edtabs button { height: 28px; padding: 0 9px; border: 1px solid #dff8f0; border-bottom: 0; background: #f4ffff; }
.editor { flex: 1; min-height: 0; display: flex; flex-direction: column; margin: 0 12px; border: 1px solid #dff8f0; border-bottom: 0; }
.toolbar { display: flex; align-items: center; gap: 14px; height: 44px; padding: 0 5px 4px; background: #f2ffff; border-bottom: 1px solid #dff8f0; color: #428a68; }
.toolbar > svg { width: 18px; height: 18px; }
.para { justify-content: space-between; width: 113px; height: 26px; padding: 0 8px; border: 1px solid #e4faf2; background: #fff; font-size: 12px; margin-left: -5px; }
.canvas { position: relative; flex: 1; background: #fff; }
.m3 { left: 280px; top: 22px; width: 45px; height: 69px; font-size: 90px; padding-top: 3px; }
.secondary { width: 280px; flex: none; }
.stub { height: 2px; border-bottom: 1px solid #a8e0c0; margin-bottom: 20px; }
.inside { position: relative; padding: 0 12px; }
.cats { height: 175px; margin-bottom: 20px; }
.cattabs { display: flex; padding-top: 7px; font-size: 13px; }
.cattabs a { height: 28px; padding: 3px 5px; color: #1f9fb0; }
.cattabs .on { border: 1px solid #dff8f0; border-bottom: 0; color: #2c6845; margin-bottom: -1px; height: 29px; background: #fff; padding-top: 2px; }
.catlist { height: 50px; border: 1px solid #dff8f0; padding: 14px 12px; font-size: 13px; }
.catlist label { display: flex; align-items: center; gap: 9px; }
.ul { color: #1f9fb0; text-decoration: underline; text-underline-offset: 3px; }
.strong { display: block; margin-top: 8px; }
.m4 { left: 47px; top: 22px; width: 49px; height: 66px; font-size: 90px; padding-top: 3px; }
.tags { height: 172px; }
.tagrow { display: flex; gap: 4px; padding-top: 13px; }
.tagrow input { width: 180px; }
.tagrow button { width: 57px; border: 1px solid #1f9fb0; border-radius: 3px; color: #1f9fb0; background: #f4ffff; }
.tags p { margin: 11px 0 25px; color: #62a47c; font-size: 12px; white-space: nowrap; }
.m5 { left: 27px; top: 79px; width: 44px; height: 68px; font-size: 90px; padding-top: 1px; background: #d8ffe6; }

.scrollbar { width: 17px; flex: none; display: flex; flex-direction: column; align-items: center; justify-content: space-between; padding: 7px 0; background: #effff6; }
.thumb { width: 15px; height: 361px; margin-top: 216px; display: flex; flex-direction: column; align-items: center; justify-content: center; gap: 2px; border: 1px solid #8cc8a4; border-radius: 2px; background: linear-gradient(to right, #e8fff2, #b4f8cc); }
.thumb i { width: 7px; height: 1px; background: #5a8a70; }

.taskbar { flex: none; display: flex; align-items: center; height: 40px; border-top: 1px solid #2f7058; background: linear-gradient(to right, #0f4a2c 0, #0f4a2c 20px, #84d8ca 40px, #84d8ca 202px, #1b5530 210px, #1f6034 460px, #1b5530 630px, #6fbf9c 640px, #62ac88 690px, #2f7048 728px, #84d8ca 738px); color: #f2fffa; font-family: "Noto Sans", "DejaVu Sans", sans-serif; }
.orb { margin-left: 8px; }
.grip { width: 10px; height: 30px; margin-left: 11px; background: radial-gradient(circle, #33705e 1px, transparent 1px) 0 0 / 3px 4px; }
.pins { display: flex; gap: 30px; margin: 0 17px 0 24px; }
.task { width: 158px; height: 38px; gap: 5px; border: 1px solid #d0ffe4; border-radius: 3px; background: linear-gradient(170deg, #a8e8c0 30%, #5f9c74 55%, #8cc8a0); font-family: "DejaVu Sans", sans-serif; font-size: 10px; text-shadow: 0 0 1px #fff; white-space: nowrap; }
.tray { display: flex; align-items: center; gap: 8px; margin-left: auto; height: 100%; }
.tray > svg { width: 16px; height: 16px; }
.lang { margin: 0 8px 4px 0; }
.clock { width: 58px; margin-left: 6px; display: flex; flex-direction: column; text-align: center; line-height: 17px; }
.desk { width: 14px; height: 100%; border: 1px solid #b8fff0; background: linear-gradient(135deg, #4f9c8a, #98f0e0); }
```
